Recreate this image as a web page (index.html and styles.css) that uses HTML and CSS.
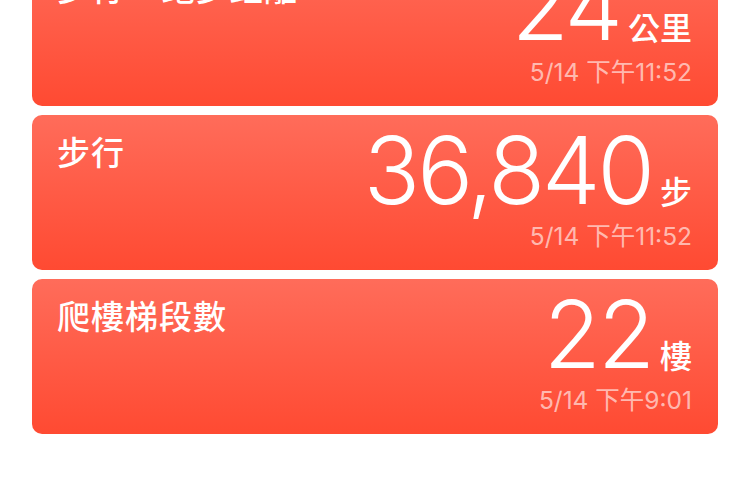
FILE: index.html
```html
<!doctype html>
<html lang="zh-Hant">
<head>
<meta charset="UTF-8" />
<meta name="viewport" content="width=device-width,initial-scale=1" />
<title>健康</title>
<link rel="stylesheet" href="styles.css">
</head>
<body>

<div class="list">
	<div class="card">
		<div class="card-title">步行 + 跑步距離</div>
		<div class="card-data">
			<div class="value"><span class="num">24</span><span class="unit">公里</span></div>
			<div class="time">5/14 下午11:52</div>
		</div>
	</div>
	<div class="card">
		<div class="card-title">步行</div>
		<div class="card-data">
			<div class="value"><span class="num">36,840</span><span class="unit">步</span></div>
			<div class="time">5/14 下午11:52</div>
		</div>
	</div>
	<div class="card">
		<div class="card-title">爬樓梯段數</div>
		<div class="card-data">
			<div class="value"><span class="num">22</span><span class="unit">樓</span></div>
			<div class="time">5/14 下午9:01</div>
		</div>
	</div>
</div>

</body>
</html>
```

FILE: styles.css
```css
html,body{margin:0;padding:0;}
body{
	background:#fff;
	font-family:"Inter","Noto Sans CJK TC",sans-serif;
	color:#fff;
}

.list{
	display:flex;
	flex-direction:column;
	gap:9px;
	padding:0 32px;
	margin-top:-49px;
}

.card{
	height:155px;
	box-sizing:border-box;
	display:flex;
	justify-content:space-between;
	padding:14px 26px 0 25px;
	border-radius:10px;
	background:linear-gradient(to bottom,#ff6c5a,#ff4a32);
}

.card-title{
	font-family:"Noto Sans CJK TC",sans-serif;
	font-size:33px;
	font-weight:500;
	line-height:40px;
	letter-spacing:1px;
	margin-top:2px;
}

.card-data{
	display:flex;
	flex-direction:column;
	align-items:flex-end;
}

.value{
	display:flex;
	align-items:baseline;
}
.value .num{
	font-size:93px;
	font-weight:300;
	line-height:82px;
	letter-spacing:-3px;
}
.value .unit{
	font-family:"Noto Sans CJK TC",sans-serif;
	font-size:32px;
	font-weight:500;
	line-height:32px;
	margin-left:8px;
}

.time{
	font-size:24.5px;
	line-height:30px;
	margin-top:10px;
	color:rgba(255,255,255,0.62);
}
```
